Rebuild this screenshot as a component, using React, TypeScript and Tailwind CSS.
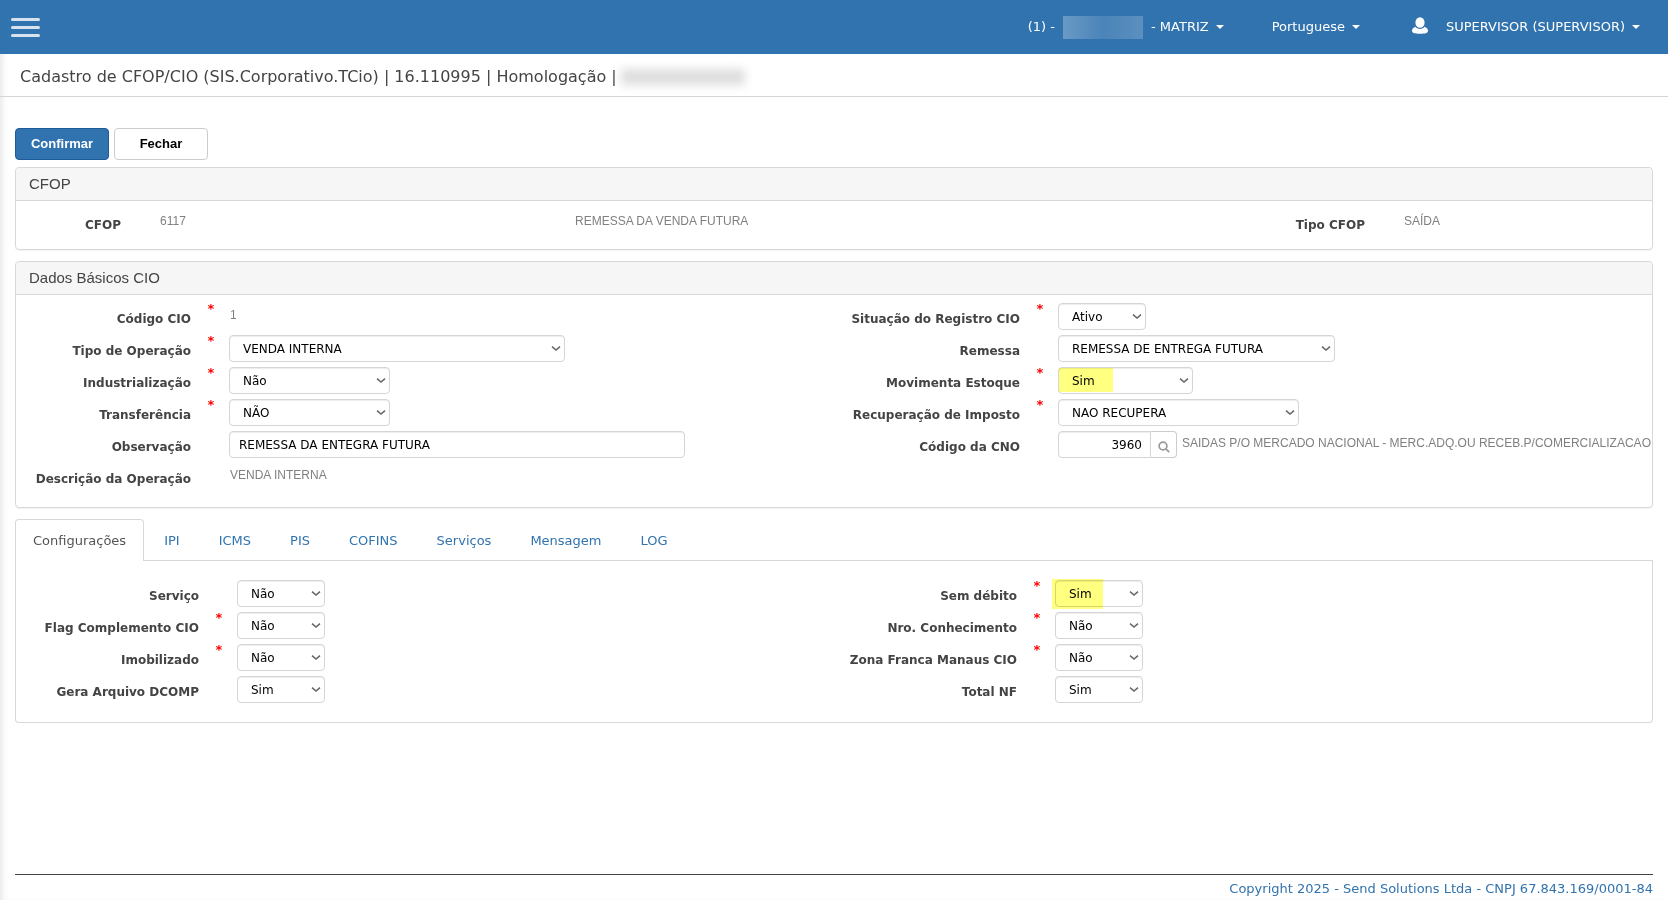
import { useState } from "react"
import type { ReactNode } from "react"

interface FieldProps {
  id: string
  label: string
  required?: boolean
  labelWidth: string
  children: ReactNode
}

function Field({ id, label, required, labelWidth, children }: FieldProps) {
  return (
    <div className="flex h-8 items-start">
      <label htmlFor={id} className={`${labelWidth} shrink-0 pt-1.5 text-right text-xs leading-5 font-bold whitespace-nowrap text-[#444]`}>
        {label}
      </label>
      <span className="w-[38px] shrink-0 pl-0.5 text-center text-[13px] leading-3 font-bold text-[#f00]">{required ? "*" : ""}</span>
      {children}
    </div>
  )
}

interface SelectProps {
  id: string
  value: string
  options: string[]
  width: string
  mark?: string
}

function Select({ id, value, options, width, mark }: SelectProps) {
  return (
    <div className={`relative ${width}`}>
      <select
        id={id}
        defaultValue={value}
        className="block h-[27px] w-full appearance-none rounded border border-[#d5d5d5] bg-white pr-6 pl-[13px] text-xs text-black shadow-[inset_0_1px_1px_rgba(0,0,0,0.075)]"
      >
        {options.map((o) => (
          <option key={o}>{o}</option>
        ))}
      </select>
      <svg className="pointer-events-none absolute top-2.5 right-1 h-2 w-2.5" viewBox="0 0 10 8" fill="none" stroke="#666" strokeWidth="1.5">
        <path d="M1 1.6 L5 5 L9 1.6" />
      </svg>
      {mark && <span className={`pointer-events-none absolute bg-[#ffff80] mix-blend-multiply ${mark}`} />}
    </div>
  )
}

function Panel({ title, children }: { title: string; children: ReactNode }) {
  return (
    <section className="rounded border border-[#d8d8d8] shadow-[0_1px_1px_rgba(0,0,0,0.05)]">
      <h2 className="rounded-t border-b border-[#d8d8d8] bg-[#f6f6f6] px-[13px] font-['Liberation_Sans',Arial,sans-serif] text-[15px] leading-8 text-[#444]">{title}</h2>
      {children}
    </section>
  )
}

function Value({ id, children }: { id: string; children: ReactNode }) {
  return (
    <output id={id} className="block pt-0.5 pl-px font-['Liberation_Sans',Arial,sans-serif] text-xs leading-5 whitespace-nowrap text-[#808080]">
      {children}
    </output>
  )
}

function Caret() {
  return (
    <svg className="ml-[7px] h-1 w-2" viewBox="0 0 8 4" fill="currentColor">
      <path d="M0 0h8L4 4z" />
    </svg>
  )
}

const simNao = ["Sim", "Não"]
const tabs = ["Configurações", "IPI", "ICMS", "PIS", "COFINS", "Serviços", "Mensagem", "LOG"]

export default function App() {
  const [tab, setTab] = useState("Configurações")

  return (
    <div className="flex min-h-screen flex-col bg-white font-[Verdana,'DejaVu_Sans',sans-serif]">
      <header className="flex h-[54px] items-center bg-[#3173ae] pr-7 pl-[11px] text-[13px] text-white">
        <button aria-label="Menu" className="flex flex-col gap-[5px]">
          <span className="h-[3px] w-[29px] rounded-full bg-[#d6e3ef]" />
          <span className="h-[3px] w-[29px] rounded-full bg-[#d6e3ef]" />
          <span className="h-[3px] w-[29px] rounded-full bg-[#d6e3ef]" />
        </button>
        <nav className="ml-auto flex items-center">
          <button className="flex items-center">
            (1) -
            <span className="mr-2 ml-2 h-[23px] w-20 bg-linear-to-r from-[#6a9ac6] via-[#4a84b8] to-[#5c90bf]" />
            - MATRIZ
            <Caret />
          </button>
          <button className="ml-12 flex items-center">
            Portuguese
            <Caret />
          </button>
          <button className="ml-[52px] flex items-center">
            <svg className="mr-[18px] mb-1 h-[17px] w-4" viewBox="0 0 16 17" fill="#fff">
              <ellipse cx="8" cy="5.5" rx="4.6" ry="5.3" />
              <path d="M3.4 9.8C1.200 10.6 0 12 0 13.8 0 16.2 3 16.8 8 16.8s8-.6 8-3c0-1.8-1.200-3.200-3.400-4C11.5 11.2 10 11.9 8 11.9s-3.500-.7-4.600-2.100z" />
            </svg>
            SUPERVISOR (SUPERVISOR)
            <Caret />
          </button>
        </nav>
      </header>

      <div className="flex grow flex-col shadow-[inset_6px_0_6px_-4px_rgba(0,0,0,0.1)]">
        <div className="flex h-[43px] items-center border-b border-[#d5d5d5] px-5 pt-1">
          <h1 className="text-base text-[#444]">Cadastro de CFOP/CIO (SIS.Corporativo.TCio) | 16.110995 | Homologação |</h1>
          <span className="ml-1 h-4 w-[124px] bg-[#dedede] blur-[5px]" />
        </div>

        <main className="px-[15px] pt-[31px]">
          <div className="flex gap-[5px] pb-[7px] font-['Liberation_Sans',Arial,sans-serif] text-[13px] font-bold">
            <button className="h-8 w-[94px] rounded border border-[#1d5c99] bg-[#3173ae] text-white">Confirmar</button>
            <button className="h-8 w-[94px] rounded border border-[#ccc] bg-white text-black">Fechar</button>
          </div>

          <Panel title="CFOP">
            <div className="grid h-12 grid-cols-[415fr_790fr_431fr] pt-2">
              <Field id="cfop" label="CFOP" labelWidth="w-[105px]">
                <Value id="cfop">6117</Value>
              </Field>
              <div className="pl-[143px]">
                <Value id="cfop-desc">REMESSA DA VENDA FUTURA</Value>
              </div>
              <Field id="tipo-cfop" label="Tipo CFOP" labelWidth="w-[144px]">
                <Value id="tipo-cfop">SAÍDA</Value>
              </Field>
            </div>
          </Panel>

          <div className="h-[11px]" />

          <Panel title="Dados Básicos CIO">
            <div className="grid grid-cols-[minmax(0,829fr)_minmax(0,807fr)] pt-2 pb-3">
              <div>
                <Field id="codigo" label="Código CIO" required labelWidth="w-[175px]">
                  <Value id="codigo">1</Value>
                </Field>
                <Field id="operacao" label="Tipo de Operação" required labelWidth="w-[175px]">
                  <Select id="operacao" value="VENDA INTERNA" options={["VENDA INTERNA"]} width="w-[336px]" />
                </Field>
                <Field id="industrializacao" label="Industrialização" required labelWidth="w-[175px]">
                  <Select id="industrializacao" value="Não" options={simNao} width="w-[161px]" />
                </Field>
                <Field id="transferencia" label="Transferência" required labelWidth="w-[175px]">
                  <Select id="transferencia" value="NÃO" options={["SIM", "NÃO"]} width="w-[161px]" />
                </Field>
                <Field id="observacao" label="Observação" labelWidth="w-[175px]">
                  <input
                    id="observacao"
                    defaultValue="REMESSA DA ENTEGRA FUTURA"
                    className="h-[27px] w-[456px] rounded border border-[#d5d5d5] px-[9px] text-xs text-black shadow-[inset_0_1px_1px_rgba(0,0,0,0.075)]"
                  />
                </Field>
                <Field id="descricao" label="Descrição da Operação" labelWidth="w-[175px]">
                  <Value id="descricao">VENDA INTERNA</Value>
                </Field>
              </div>
              <div>
                <Field id="situacao" label="Situação do Registro CIO" required labelWidth="w-[175px]">
                  <Select id="situacao" value="Ativo" options={["Ativo", "Inativo"]} width="w-[88px]" />
                </Field>
                <Field id="remessa" label="Remessa" labelWidth="w-[175px]">
                  <Select id="remessa" value="REMESSA DE ENTREGA FUTURA" options={["REMESSA DE ENTREGA FUTURA"]} width="w-[277px]" />
                </Field>
                <Field id="estoque" label="Movimenta Estoque" required labelWidth="w-[175px]">
                  <Select id="estoque" value="Sim" options={simNao} width="w-[135px]" mark="top-px left-px h-6 w-[54px]" />
                </Field>
                <Field id="imposto" label="Recuperação de Imposto" required labelWidth="w-[175px]">
                  <Select id="imposto" value="NAO RECUPERA" options={["NAO RECUPERA"]} width="w-[241px]" />
                </Field>
                <Field id="cno" label="Código da CNO" labelWidth="w-[175px]">
                  <div className="mr-1 flex shrink-0">
                    <input
                      id="cno"
                      defaultValue="3960"
                      className="h-[27px] w-[93px] rounded-l border border-[#d5d5d5] px-2 text-right text-xs text-black shadow-[inset_0_1px_1px_rgba(0,0,0,0.075)]"
                    />
                    <button aria-label="Pesquisar" className="flex h-[27px] w-[26px] items-end justify-center rounded-r border border-l-0 border-[#ccc] pb-1">
                      <svg className="h-3 w-3" viewBox="0 0 12 12" fill="none" stroke="#999" strokeWidth="1.7">
                        <circle cx="5" cy="5" r="3.9" />
                        <path d="M7.9 7.9 L11.2 11.2" />
                      </svg>
                    </button>
                  </div>
                  <Value id="cno-desc">SAIDAS P/O MERCADO NACIONAL - MERC.ADQ.OU RECEB.P/COMERCIALIZACAO</Value>
                </Field>
              </div>
            </div>
          </Panel>

          <div role="tablist" className="mt-[11px] flex gap-px border-b border-[#d8d8d8] text-[13px]">
            {tabs.map((t) => (
              <button
                key={t}
                role="tab"
                aria-selected={tab === t}
                onClick={() => setTab(t)}
                className={
                  tab === t
                    ? "-mb-px h-[42px] rounded-t border border-b-0 border-[#d8d8d8] bg-white px-[17px] text-[#555]"
                    : "-mb-px h-[42px] border border-b-0 border-transparent px-[18px] text-[#3173ae]"
                }
              >
                {t}
              </button>
            ))}
          </div>
          <div role="tabpanel" className="grid grid-cols-2 rounded-b border border-t-0 border-[#d8d8d8] pt-[19px] pb-[14px]">
            <div>
              <Field id="servico" label="Serviço" labelWidth="w-[183px]">
                <Select id="servico" value="Não" options={simNao} width="w-[88px]" />
              </Field>
              <Field id="flag" label="Flag Complemento CIO" required labelWidth="w-[183px]">
                <Select id="flag" value="Não" options={simNao} width="w-[88px]" />
              </Field>
              <Field id="imobilizado" label="Imobilizado" required labelWidth="w-[183px]">
                <Select id="imobilizado" value="Não" options={simNao} width="w-[88px]" />
              </Field>
              <Field id="dcomp" label="Gera Arquivo DCOMP" labelWidth="w-[183px]">
                <Select id="dcomp" value="Sim" options={simNao} width="w-[88px]" />
              </Field>
            </div>
            <div>
              <Field id="debito" label="Sem débito" required labelWidth="w-[183px]">
                <Select id="debito" value="Sim" options={simNao} width="w-[88px]" mark="-top-px -left-[3px] h-[30px] w-[51px]" />
              </Field>
              <Field id="conhecimento" label="Nro. Conhecimento" required labelWidth="w-[183px]">
                <Select id="conhecimento" value="Não" options={simNao} width="w-[88px]" />
              </Field>
              <Field id="manaus" label="Zona Franca Manaus CIO" required labelWidth="w-[183px]">
                <Select id="manaus" value="Não" options={simNao} width="w-[88px]" />
              </Field>
              <Field id="total" label="Total NF" labelWidth="w-[183px]">
                <Select id="total" value="Sim" options={simNao} width="w-[88px]" />
              </Field>
            </div>
          </div>
        </main>

        <footer className="mx-[15px] mt-auto h-[26px] border-t border-[#444] text-right text-[13px] leading-7">
          <a href="#" className="text-[#3173ae]">Copyright 2025 - Send Solutions Ltda - CNPJ 67.843.169/0001-84</a>
        </footer>
      </div>
    </div>
  )
}
